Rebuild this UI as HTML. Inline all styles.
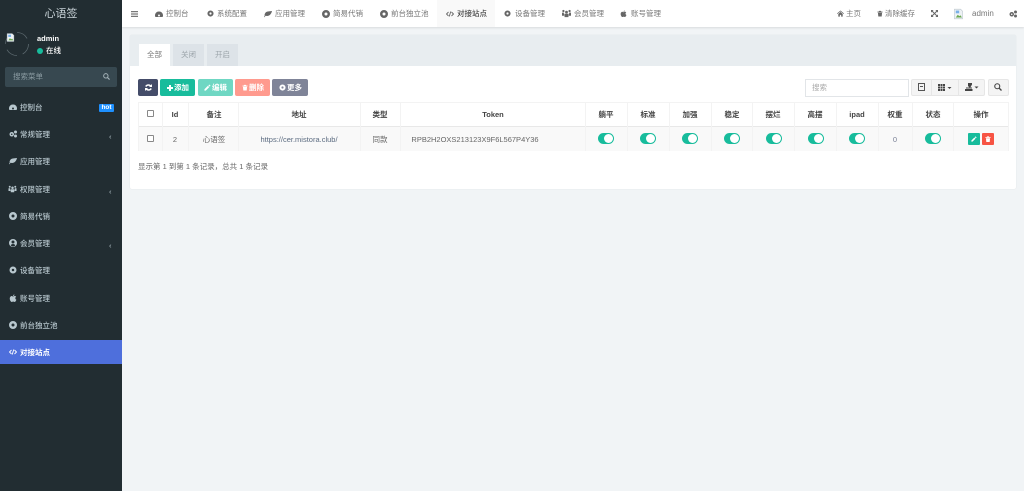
<!DOCTYPE html>
<html lang="zh"><head><meta charset="utf-8"><title>心语签</title>
<style>
*{box-sizing:border-box}
html,body{margin:0;padding:0;width:1024px;height:491px;overflow:hidden;background:#f1f4f6;font-family:"Liberation Sans","Noto Sans CJK SC",sans-serif;font-size:7.5px;color:#555}
#w{position:absolute;left:0;top:0;width:1024px;height:491px;background:#f1f4f6;filter:blur(.3px)}
.a{position:absolute;white-space:nowrap;line-height:10px}
svg.i{position:absolute;overflow:visible}
#side{position:absolute;left:0;top:0;width:122px;height:491px;background:#222d32}
#top{position:absolute;left:122px;top:0;width:902px;height:27px;background:#fff;box-shadow:0 1px 2px rgba(0,0,0,.1)}
.s{color:#b8c7ce;font-weight:500;transform:translateY(1px)}
.n{color:#777;top:9px}
.th{font-weight:bold;color:#444;top:110px;transform:translateX(-50%)}
.td{color:#666;top:134.5px;transform:translateX(-50%)}
.v{position:absolute;width:1px;top:102px;height:49px;background:#f3f3f3}
.sw{position:absolute;top:133px;width:16px;height:11px;border-radius:6px;background:#18bc9c}
.sw:after{content:"";position:absolute;right:1px;top:1px;width:9px;height:9px;border-radius:50%;background:#fff}
.b{position:absolute;top:79px;height:17px;border-radius:2px;color:#fff;font-weight:bold;line-height:17px;text-align:center}
.cb{position:absolute;width:7px;height:7px;border:1px solid #888;background:#fff;border-radius:1px}
.tb{position:absolute;top:79px;height:17px;background:#f4f4f4;border:1px solid #e6e6e6}
</style></head><body>
<svg width="0" height="0" style="position:absolute"><defs>
<symbol id="dash" viewBox="0 0 16 16"><path fill="currentColor" d="M8 3a7.500 7.500 0 0 0-8 8c0 1 .3 2 .8 3h14.400c.5-1 .8-2 .8-3a7.500 7.500 0 0 0-8-8zm0 6a2 2 0 1 1 0 4 2 2 0 0 1 0-4z"/></symbol>
<symbol id="gear" viewBox="0 0 16 16"><path fill="currentColor" fill-rule="evenodd" d="M8 1a7 7 0 1 0 0 14A7 7 0 0 0 8 1zm0 4.500a2.500 2.500 0 1 1 0 5 2.500 2.500 0 0 1 0-5z"/></symbol>
<symbol id="gears" viewBox="0 0 16 16"><path fill="currentColor" fill-rule="evenodd" d="M5.500 4a4.500 4.500 0 1 0 0 9 4.500 4.500 0 0 0 0-9zm0 3a1.500 1.500 0 1 1 0 3 1.500 1.500 0 0 1 0-3zM13 1a3 3 0 1 0 0 6 3 3 0 0 0 0-6zm0 8a3 3 0 1 0 0 6 3 3 0 0 0 0-6z"/></symbol>
<symbol id="leaf" viewBox="0 0 16 16"><path fill="currentColor" d="M16 2C10 3 4 2 2 7c-1 2-1 3-.5 4L0 14l1 .5 2-3c4 1 8 0 10-3 1.500-2 2.500-4 3-6.500z"/></symbol>
<symbol id="disc" viewBox="0 0 16 16"><path fill="currentColor" fill-rule="evenodd" d="M8 0a8 8 0 1 0 0 16A8 8 0 0 0 8 0zm0 5a3 3 0 1 1 0 6 3 3 0 0 1 0-6z"/></symbol>
<symbol id="code" viewBox="0 0 16 16"><path fill="none" stroke="currentColor" stroke-width="1.800" d="M5 4 1 8l4 4M11 4l4 4-4 4M9.500 3l-3 10"/></symbol>
<symbol id="apple" viewBox="0 0 16 16"><path fill="currentColor" d="M11 1c0 2-1.500 3-3 3 0-2 1.500-3 3-3zM8 5c1 0 2-1 3.500-1 1 0 2 .5 2.800 1.500-2.500 1.500-2 5 .5 6-.8 2-2 4.500-3.500 4.500-1 0-1.500-.7-2.800-.7s-1.800.7-2.800.7C3.500 16 1.500 12 1.500 9c0-3 2-5 4-5C6.500 4 7.300 5 8 5z"/></symbol>
<symbol id="users" viewBox="0 0 16 16"><path fill="currentColor" d="M8 3a2.500 2.500 0 1 1 0 5 2.500 2.500 0 0 1 0-5zM2.500 1.500a2 2 0 1 1 0 4 2 2 0 0 1 0-4zm11 0a2 2 0 1 1 0 4 2 2 0 0 1 0-4zM0 6.500h3.500c-.3 1-.3 2.500.5 3.500v2H0zm16 0h-3.500c.3 1 .3 2.500-.5 3.500v2h4zM4.500 8.500h7v6h-7z"/></symbol>
<symbol id="user" viewBox="0 0 16 16"><path fill="currentColor" fill-rule="evenodd" d="M8 0a8 8 0 1 0 0 16A8 8 0 0 0 8 0zm0 3a3 3 0 1 1 0 6 3 3 0 0 1 0-6zM3.500 13c.5-2 2-3 4.500-3s4 1 4.500 3a6 6 0 0 1-9 0z"/></symbol>
<symbol id="trash" viewBox="0 0 16 16"><path fill="currentColor" d="M5.500 1h5l1 2H15v2H1V3h3.500zM2.500 6h11l-1 10h-9z"/></symbol>
<symbol id="pencil" viewBox="0 0 16 16"><path fill="currentColor" d="M12 1l3 3-2 2-3-3zM9 4l3 3-8 8H1v-3z"/></symbol>
<symbol id="search" viewBox="0 0 16 16"><circle cx="6.500" cy="6.500" r="5" fill="none" stroke="currentColor" stroke-width="2.200"/><path stroke="currentColor" stroke-width="2.600" d="M10.500 10.500 15 15"/></symbol>
<symbol id="home" viewBox="0 0 16 16"><path fill="currentColor" d="M8 1 0 8l1 1 7-6 7 6 1-1zM3 9l5-4.500L13 9v6H9.500v-4h-3v4H3z"/></symbol>
<symbol id="exp" viewBox="0 0 16 16"><path fill="none" stroke="currentColor" stroke-width="2.200" d="M2 2l12 12M14 2 2 14"/><path fill="currentColor" d="M0 0h6L0 6zM16 0v6l-6-6zM0 16v-6l6 6zM16 16h-6l6-6z"/></symbol>
<symbol id="img" viewBox="0 0 16 16"><path fill="#eef2f5" stroke="#b9c4cc" stroke-width=".8" d="M2 1h9l3 3v11H2z"/><path fill="#6aa84f" d="M4 13l3-4 2 2 2-1 2 3z"/><path fill="#7ab0e8" d="M4 3h5v4H4z"/></symbol>
</defs></svg>
<div id="w">
<div id="side"></div>
<div class="a" style="left:0;top:8px;width:122px;text-align:center;font-size:11px;line-height:12px;color:#c9d3d8">心语签</div>
<svg class="i" style="left:5px;top:32px" width="24" height="24"><circle cx="12" cy="12" r="11.500" fill="none" stroke="#5d6a70" stroke-width=".8" stroke-dasharray="12 6"/></svg>
<svg class="i" style="left:6px;top:33px" width="9" height="9"><use href="#img"/></svg>
<div class="a" style="left:37px;top:34px;color:#fff;font-weight:bold">admin</div>
<div style="position:absolute;left:37px;top:48px;width:6px;height:6px;border-radius:50%;background:#18bc9c"></div>
<div class="a" style="left:46px;top:46px;color:#fff;font-weight:500">在线</div>
<div style="position:absolute;left:5px;top:67px;width:112px;height:20px;background:#374850;border-radius:2px"></div>
<div class="a" style="left:13px;top:72px;color:#8a9aa1">搜索菜单</div>
<svg class="i" style="left:103px;top:73px;color:#a6b4ba" width="7" height="7"><use href="#search"/></svg>

<div style="position:absolute;left:0;top:340px;width:122px;height:24px;background:#4e6fdc"></div>

<svg class="i" style="left:9px;top:103px;color:#b8c7ce" width="8" height="8"><use href="#dash"/></svg><div class="a s" style="left:20px;top:102px">控制台</div>
<div class="a" style="left:99px;top:104px;width:15px;height:8px;line-height:8px;background:#1e90ff;color:#fff;font-size:6.500px;font-weight:bold;text-align:center;border-radius:1px">hot</div>
<svg class="i" style="left:9px;top:130px;color:#b8c7ce" width="8" height="8"><use href="#gears"/></svg><div class="a s" style="left:20px;top:129px">常规管理</div><div class="a s" style="left:109px;top:131px">‹</div>
<svg class="i" style="left:9px;top:157px;color:#b8c7ce" width="8" height="8"><use href="#leaf"/></svg><div class="a s" style="left:20px;top:156px">应用管理</div>
<svg class="i" style="left:8px;top:185px;color:#b8c7ce" width="9" height="8"><use href="#users"/></svg><div class="a s" style="left:20px;top:184px">权限管理</div><div class="a s" style="left:109px;top:186px">‹</div>
<svg class="i" style="left:9px;top:212px;color:#b8c7ce" width="8" height="8"><use href="#disc"/></svg><div class="a s" style="left:20px;top:211px">简易代销</div>
<svg class="i" style="left:9px;top:239px;color:#b8c7ce" width="8" height="8"><use href="#user"/></svg><div class="a s" style="left:20px;top:238px">会员管理</div><div class="a s" style="left:109px;top:240px">‹</div>
<svg class="i" style="left:9px;top:266px;color:#b8c7ce" width="8" height="8"><use href="#gear"/></svg><div class="a s" style="left:20px;top:265px">设备管理</div>
<svg class="i" style="left:9px;top:294px;color:#b8c7ce" width="8" height="8"><use href="#apple"/></svg><div class="a s" style="left:20px;top:293px">账号管理</div>
<svg class="i" style="left:9px;top:321px;color:#b8c7ce" width="8" height="8"><use href="#disc"/></svg><div class="a s" style="left:20px;top:320px">前台独立池</div>
<svg class="i" style="left:9px;top:348px;color:#fff" width="8" height="8"><use href="#code"/></svg><div class="a" style="left:20px;top:348px;color:#fff;font-weight:bold">对接站点</div>

<div id="top"></div>
<div style="position:absolute;left:437px;top:0;width:58px;height:27px;background:#f9f9f9"></div>
<svg class="i" style="left:131px;top:11px;color:#777" width="7" height="6"><path fill="currentColor" d="M0 0h7v1.200H0zM0 2.400h7v1.200H0zM0 4.800h7V6H0z"/></svg>
<svg class="i" style="left:155px;top:10px;color:#666" width="8" height="8"><use href="#dash"/></svg><div class="a n" style="left:166px">控制台</div>
<svg class="i" style="left:207px;top:10px;color:#666" width="7" height="7"><use href="#gear"/></svg><div class="a n" style="left:217px">系统配置</div>
<svg class="i" style="left:264px;top:10px;color:#666" width="8" height="8"><use href="#leaf"/></svg><div class="a n" style="left:275px">应用管理</div>
<svg class="i" style="left:322px;top:10px;color:#666" width="8" height="8"><use href="#disc"/></svg><div class="a n" style="left:333px">简易代销</div>
<svg class="i" style="left:380px;top:10px;color:#666" width="8" height="8"><use href="#disc"/></svg><div class="a n" style="left:391px">前台独立池</div>
<svg class="i" style="left:446px;top:10px;color:#666" width="8" height="8"><use href="#code"/></svg><div class="a n" style="left:457px;color:#444;font-weight:500">对接站点</div>
<svg class="i" style="left:504px;top:10px;color:#666" width="7" height="7"><use href="#gear"/></svg><div class="a n" style="left:515px">设备管理</div>
<svg class="i" style="left:562px;top:9px;color:#666" width="9" height="9"><use href="#users"/></svg><div class="a n" style="left:574px">会员管理</div>
<svg class="i" style="left:620px;top:10px;color:#666" width="7" height="7"><use href="#apple"/></svg><div class="a n" style="left:631px">账号管理</div>

<svg class="i" style="left:837px;top:10px;color:#666" width="7" height="7"><use href="#home"/></svg><div class="a n" style="left:846px">主页</div>
<svg class="i" style="left:877px;top:10px;color:#666" width="6" height="7"><use href="#trash"/></svg><div class="a n" style="left:885px">清除缓存</div>
<svg class="i" style="left:931px;top:10px;color:#666" width="7" height="7"><use href="#exp"/></svg>
<svg class="i" style="left:953px;top:8px" width="11" height="12"><use href="#img"/></svg><div class="a n" style="left:972px;font-size:8px">admin</div>
<svg class="i" style="left:1009px;top:10px;color:#666" width="8" height="8"><use href="#gears"/></svg>

<div style="position:absolute;left:130px;top:35px;width:886px;height:154px;background:#fff;border-radius:2px;box-shadow:0 0 1px rgba(0,0,0,.12)"></div>
<div style="position:absolute;left:130px;top:35px;width:886px;height:31px;background:#e8edf0"></div>
<div class="a" style="left:139px;top:44px;width:31px;height:22px;line-height:22px;background:#fff;text-align:center;color:#777">全部</div>
<div class="a" style="left:173px;top:44px;width:31px;height:22px;line-height:22px;background:#dde3e8;text-align:center;color:#9aa3a9">关闭</div>
<div class="a" style="left:207px;top:44px;width:31px;height:22px;line-height:22px;background:#dde3e8;text-align:center;color:#9aa3a9">开启</div>

<div class="b" style="left:138px;width:20px;background:#444c69"></div>
<svg class="i" style="left:145px;top:84px" width="7" height="7"><path fill="none" stroke="#fff" stroke-width="1.500" d="M6 2.500A3 3 0 0 0 .8 2.500M1 4.500a3 3 0 0 0 5.200 0"/><path fill="#fff" d="M7 0v3H4zM0 7V4h3z"/></svg>
<div class="b" style="left:160px;width:35px;background:#18bc9c;padding-left:8px">添加</div>
<svg class="i" style="left:167px;top:84.500px" width="6" height="6"><path fill="#fff" d="M2 0h2v2h2v2H4v2H2V4H0V2h2z"/></svg>
<div class="b" style="left:198px;width:35px;background:#6fd7c3;padding-left:8px">编辑</div>
<svg class="i" style="left:204px;top:84px;color:#fff" width="7" height="7"><use href="#pencil"/></svg>
<div class="b" style="left:235px;width:35px;background:#ff9a8e;padding-left:8px">删除</div>
<svg class="i" style="left:242px;top:84px;color:#fff" width="6" height="7"><use href="#trash"/></svg>
<div class="b" style="left:272px;width:36px;background:#7f8498;padding-left:9px">更多</div>
<svg class="i" style="left:279px;top:84px;color:#fff" width="7" height="7"><use href="#gear"/></svg>

<div style="position:absolute;left:805px;top:79px;width:104px;height:18px;background:#fff;border:1px solid #e2e5e8"></div>
<div class="a" style="left:812px;top:83px;color:#aaa">搜索</div>
<div class="tb" style="left:911px;width:21px;border-radius:2px 0 0 2px"></div>
<div class="tb" style="left:931px;width:28px"></div>
<div class="tb" style="left:958px;width:27px;border-radius:0 2px 2px 0"></div>
<div class="tb" style="left:988px;width:21px;border-radius:2px"></div>
<svg class="i" style="left:918px;top:83px" width="7" height="8"><path fill="#555" fill-rule="evenodd" d="M0 0h7v8H0zM1 1v6h5V1zM2 3h3v1H2z"/></svg>
<svg class="i" style="left:938px;top:84px" width="14" height="7"><path fill="#444" d="M0 0h2v2H0zM2.500 0h2v2h-2zM5 0h2v2H5zM0 2.500h2v2H0zM2.500 2.500h2v2h-2zM5 2.500h2v2H5zM0 5h2v2H0zM2.500 5h2v2h-2zM5 5h2v2H5zM9.500 3h4L11.500 5z"/></svg>
<svg class="i" style="left:965px;top:83px" width="14" height="8"><path fill="#444" d="M3 0h4v1.500L5 5 3 3zM0 6h7.500v2H0zM9.500 3.500h4l-2 2z"/><path fill="#444" d="M1 4.500h6v1H1z"/></svg>
<svg class="i" style="left:994px;top:83px;color:#444" width="8" height="8"><use href="#search"/></svg>

<div style="position:absolute;left:138px;top:102px;width:870px;height:1px;background:#f3f3f3"></div>
<div style="position:absolute;left:138px;top:126px;width:870px;height:1px;background:#e8e8e8"></div>
<div style="position:absolute;left:138px;top:127px;width:870px;height:24px;background:#f9f9f9"></div>
<div class="v" style="left:138px"></div><div class="v" style="left:162px"></div><div class="v" style="left:188px"></div><div class="v" style="left:238px"></div><div class="v" style="left:360px"></div><div class="v" style="left:400px"></div><div class="v" style="left:585px"></div><div class="v" style="left:627px"></div><div class="v" style="left:669px"></div><div class="v" style="left:711px"></div><div class="v" style="left:752px"></div><div class="v" style="left:794px"></div><div class="v" style="left:836px"></div><div class="v" style="left:878px"></div><div class="v" style="left:912px"></div><div class="v" style="left:953px"></div><div class="v" style="left:1008px"></div>

<div class="cb" style="left:147px;top:110px"></div>
<div class="a th" style="left:175px">Id</div><div class="a th" style="left:214px">备注</div><div class="a th" style="left:299px">地址</div><div class="a th" style="left:380px">类型</div><div class="a th" style="left:493px">Token</div><div class="a th" style="left:606px">躺平</div><div class="a th" style="left:648px">标准</div><div class="a th" style="left:690px">加强</div><div class="a th" style="left:732px">稳定</div><div class="a th" style="left:773px">摆烂</div><div class="a th" style="left:815px">高摆</div><div class="a th" style="left:857px">ipad</div><div class="a th" style="left:895px">权重</div><div class="a th" style="left:933px">状态</div><div class="a th" style="left:981px">操作</div>

<div class="cb" style="left:147px;top:135px"></div>
<div class="a td" style="left:175px">2</div><div class="a td" style="left:214px">心语签</div><div class="a td" style="left:299px;color:#5b6b80">https://cer.mistora.club/</div><div class="a td" style="left:380px">同款</div><div class="a td" style="left:475px">RPB2H2OXS213123X9F6L567P4Y36</div>
<div class="sw" style="left:598px"></div><div class="sw" style="left:640px"></div><div class="sw" style="left:682px"></div><div class="sw" style="left:724px"></div><div class="sw" style="left:766px"></div><div class="sw" style="left:808px"></div><div class="sw" style="left:849px"></div>
<div class="a td" style="left:895px;color:#7a8096">0</div>
<div class="sw" style="left:925px"></div>
<div style="position:absolute;left:968px;top:133px;width:12px;height:12px;background:#18bc9c;border-radius:1px"></div>
<svg class="i" style="left:971px;top:136px;color:#fff" width="6" height="6"><use href="#pencil"/></svg>
<div style="position:absolute;left:982px;top:133px;width:12px;height:12px;background:#f75444;border-radius:1px"></div>
<svg class="i" style="left:985px;top:136px;color:#fff" width="6" height="6"><use href="#trash"/></svg>

<div class="a" style="left:138px;top:162px;color:#666">显示第 1 到第 1 条记录，总共 1 条记录</div>
</div>
</body></html>
